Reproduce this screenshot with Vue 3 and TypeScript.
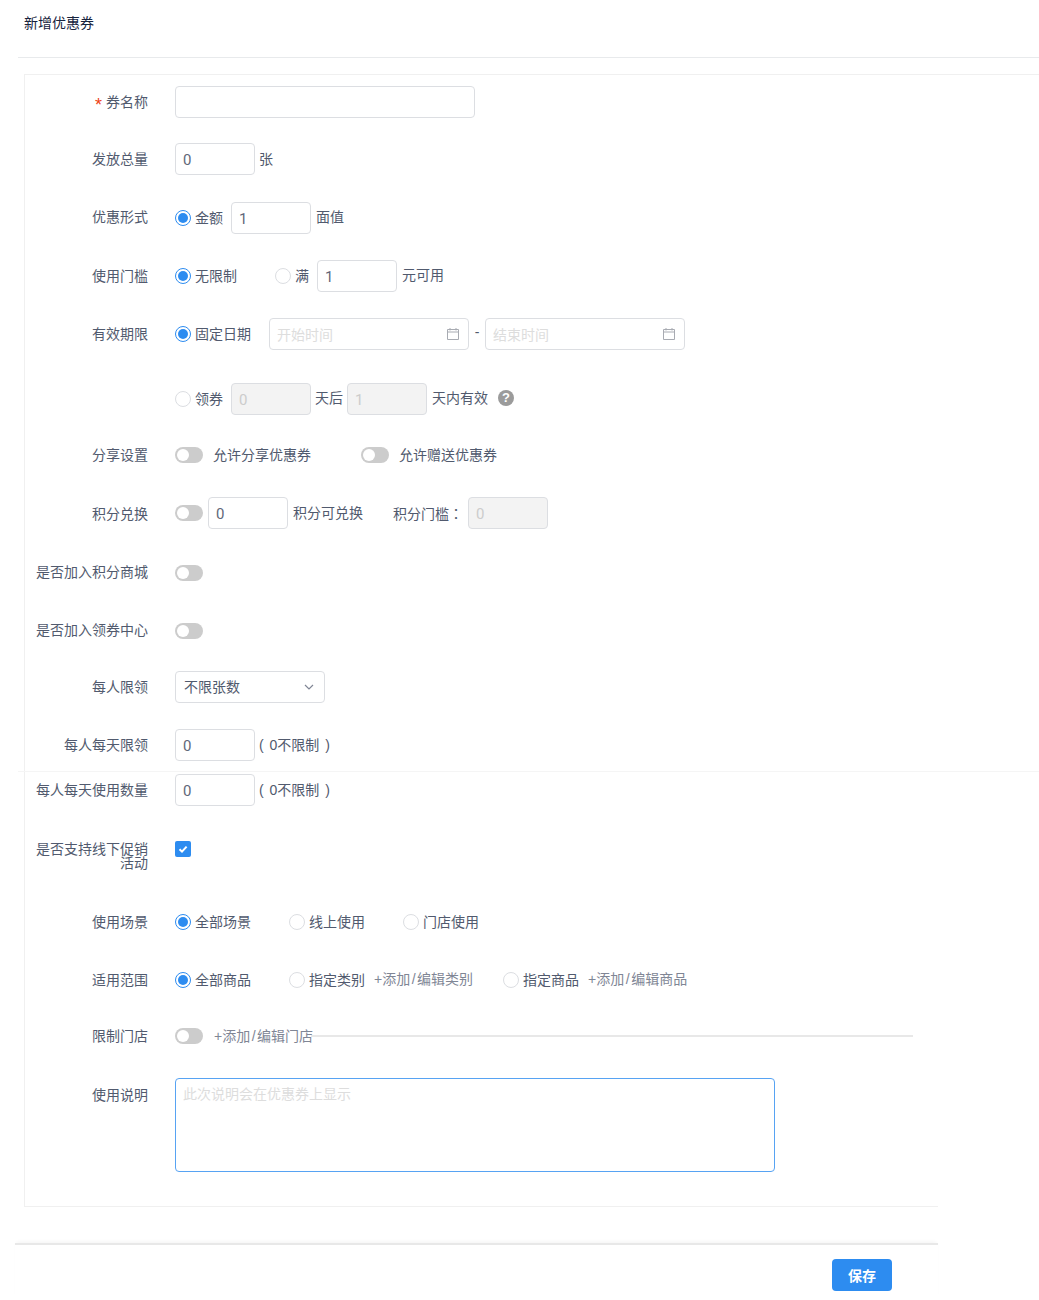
<script setup lang="ts">
import { ref } from 'vue'
const desc = ref('')
</script>

<template>
  <div class="page">
    <div class="title">新增优惠券</div>
    <div class="card">
      <div class="row">
        <label class="lbl"><span class="star">*</span> 券名称</label>
        <input class="ipt w300" />
      </div>
      <div class="row mt25">
        <label class="lbl">发放总量</label>
        <input class="ipt w80" value="0" /><span class="t ml4">张</span>
      </div>
      <div class="row mt27">
        <label class="lbl lift">优惠形式</label>
        <span class="radio on"></span><span class="t ml4">金额</span>
        <input class="ipt w80 ml8" value="1" /><span class="t ml5 up">面值</span>
      </div>
      <div class="row mt26">
        <label class="lbl">使用门槛</label>
        <span class="radio on"></span><span class="t ml4">无限制</span>
        <span class="radio ml38"></span><span class="t ml4">满</span>
        <input class="ipt w80 ml8" value="1" /><span class="t ml5 up">元可用</span>
      </div>
      <div class="row mt26">
        <label class="lbl">有效期限</label>
        <span class="radio on"></span><span class="t ml4">固定日期</span>
        <span class="date ml18">
          <input class="ipt w200" placeholder="开始时间" />
          <svg class="cal" width="14" height="14" viewBox="0 0 14 14" fill="none" stroke="#a8abb2" stroke-width="1"><path d="M1.5 2.5h11v10h-11zM1.5 5h11M4 1v2.5M10 1v2.5" /></svg>
        </span>
        <span class="t dash">-</span>
        <span class="date">
          <input class="ipt w200" placeholder="结束时间" />
          <svg class="cal" width="14" height="14" viewBox="0 0 14 14" fill="none" stroke="#a8abb2" stroke-width="1"><path d="M1.5 2.5h11v10h-11zM1.5 5h11M4 1v2.5M10 1v2.5" /></svg>
        </span>
      </div>
      <div class="row mt33">
        <label class="lbl"></label>
        <span class="radio"></span><span class="t ml4">领券</span>
        <input class="ipt w80 ml8" disabled value="0" /><span class="t ml4 up">天后</span>
        <input class="ipt w80 ml4" disabled value="1" /><span class="t ml5 up">天内有效</span>
        <span class="help">?</span>
      </div>
      <div class="row mt24">
        <label class="lbl">分享设置</label>
        <span class="sw"></span><span class="t ml10">允许分享优惠券</span>
        <span class="sw ml50"></span><span class="t ml10">允许赠送优惠券</span>
      </div>
      <div class="row mt26">
        <label class="lbl drop">积分兑换</label>
        <span class="sw"></span>
        <input class="ipt w80 ml5" value="0" /><span class="t ml5">积分可兑换</span>
        <span class="t ml30">积分门槛<span class="tc">：</span></span>
        <input class="ipt w80 ml5" disabled value="0" />
      </div>
      <div class="row mt28">
        <label class="lbl lift">是否加入积分商城</label>
        <span class="sw"></span>
      </div>
      <div class="row mt26">
        <label class="lbl lift">是否加入领券中心</label>
        <span class="sw"></span>
      </div>
      <div class="row mt24">
        <label class="lbl">每人限领</label>
        <div class="select">
          <span class="up">不限张数</span>
          <svg width="14" height="14" viewBox="0 0 14 14" fill="none" stroke="#808695" stroke-width="1.2"><path d="M3 5l4 4 4-4" /></svg>
        </div>
      </div>
      <div class="row mt26">
        <label class="lbl">每人每天限领</label>
        <input class="ipt w80" value="0" /><span class="t ml4 wide">( 0不限制 )</span>
      </div>
      <div class="row mt13">
        <label class="lbl">每人每天使用数量</label>
        <input class="ipt w80" value="0" /><span class="t ml4 wide">( 0不限制 )</span>
      </div>
      <div class="row mt27">
        <label class="lbl">是否支持线下促销活动</label>
        <span class="check">
          <svg width="10" height="10" viewBox="0 0 10 10" fill="none" stroke="#fff" stroke-width="2"><path d="M1.5 5.2 4 7.6l4.6-5" /></svg>
        </span>
      </div>
      <div class="row mt41">
        <label class="lbl">使用场景</label>
        <span class="radio on"></span><span class="t ml4">全部场景</span>
        <span class="radio ml38"></span><span class="t ml4">线上使用</span>
        <span class="radio ml38"></span><span class="t ml4">门店使用</span>
      </div>
      <div class="row mt26">
        <label class="lbl">适用范围</label>
        <span class="radio on"></span><span class="t ml4">全部商品</span>
        <span class="radio ml38"></span><span class="t ml4">指定类别</span>
        <span class="t link ml9 up">+添加<span class="slash">/</span>编辑类别</span>
        <span class="radio ml30"></span><span class="t ml4">指定商品</span>
        <span class="t link ml9 up">+添加<span class="slash">/</span>编辑商品</span>
      </div>
      <div class="row mt24 store">
        <label class="lbl">限制门店</label>
        <span class="sw"></span>
        <span class="t link ml11">+添加<span class="slash">/</span>编辑门店</span>
        <span class="rule"></span>
      </div>
      <div class="row mt26 tall">
        <label class="lbl drop">使用说明</label>
        <textarea v-model="desc" class="area" placeholder="此次说明会在优惠券上显示"></textarea>
      </div>
    </div>
    <div class="foot">
      <button class="save" type="button">保存</button>
    </div>
    <div class="overlay-line"></div>
  </div>
</template>

<style>
html, body { margin: 0; background: #fff; overflow-x: hidden; }
</style>

<style scoped>
.page {
  position: relative;
  width: 1039px;
  overflow: hidden;
  font-family: "Liberation Sans", "Noto Sans CJK SC", sans-serif;
  font-size: 14px;
  color: #515a6e;
}
.title {
  height: 41px;
  margin-left: 18px;
  padding: 16px 0 0 6px;
  border-bottom: 1px solid #e8eaec;
  line-height: 15px;
  color: #17233d;
}
.card {
  position: relative;
  box-sizing: border-box;
  width: 914px;
  height: 1133px;
  margin: 16px 0 0 24px;
  padding: 12px 25px 0 0;
  border-left: 1px solid #f0f0f0;
  border-bottom: 1px solid #f0f0f0;
}
.card::before {
  content: "";
  position: absolute;
  top: 0;
  left: 0;
  width: 1015px;
  height: 1px;
  background: #f0f0f0;
}
.row {
  display: flex;
  align-items: center;
  height: 32px;
}
.tall { height: 94px; align-items: flex-start; }
.lbl {
  align-self: flex-start;
  flex: none;
  box-sizing: border-box;
  width: 150px;
  padding: 9px 27px 0 0;
  line-height: 14px;
  text-align: right;
}
.lift { padding-top: 8px; }
.drop { padding-top: 10px; }
.star {
  position: relative;
  top: 4px;
  margin-left: -2px;
  color: #ed4014;
  font-size: 18px;
  line-height: 0;
}
.t { white-space: nowrap; line-height: 20px; position: relative; top: 0; }
.up { position: relative; top: -1px; }
.wide { word-spacing: 2px; }
.tc { font-family: "Noto Sans CJK TC", sans-serif; }
.slash { padding: 0 1.5px; }
.link { color: #808695; }
.ipt {
  box-sizing: border-box;
  height: 32px;
  padding: 5px 7px 3px;
  border: 1px solid #dcdee2;
  border-radius: 4px;
  background: #fff;
  outline: none;
  font-family: Roboto, "Noto Sans CJK SC", sans-serif;
  font-size: 15px;
  color: #5f6779;
}
.ipt::placeholder {
  color: #dddddd;
  font-family: "Liberation Sans", "Noto Sans CJK SC", sans-serif;
  font-size: 14px;
  opacity: 1;
}
.ipt:disabled { background: #f3f3f3; color: #ccc; }
.w80 { width: 80px; }
.w200 { width: 200px; }
.w300 { width: 300px; }
.ml4 { margin-left: 4px; }
.ml5 { margin-left: 5px; }
.ml8 { margin-left: 8px; }
.ml9 { margin-left: 9px; }
.ml10 { margin-left: 10px; }
.ml11 { margin-left: 11px; }
.ml18 { margin-left: 18px; }
.ml30 { margin-left: 30px; }
.ml38 { margin-left: 38px; }
.ml50 { margin-left: 50px; }
.mt13 { margin-top: 13px; }
.mt24 { margin-top: 24px; }
.mt25 { margin-top: 25px; }
.mt26 { margin-top: 26px; }
.mt27 { margin-top: 27px; }
.mt28 { margin-top: 28px; }
.mt33 { margin-top: 33px; }
.mt41 { margin-top: 41px; }
.radio {
  flex: none;
  box-sizing: border-box;
  position: relative;
  width: 16px;
  height: 16px;
  border: 1px solid #dcdee2;
  border-radius: 50%;
  background: #fff;
}
.radio.on { border-color: #2d8cf0; }
.radio.on::after {
  content: "";
  position: absolute;
  top: 2px;
  left: 2px;
  width: 10px;
  height: 10px;
  border-radius: 50%;
  background: #2d8cf0;
}
.date { position: relative; display: inline-flex; }
.cal { position: absolute; top: 9px; right: 9px; }
.dash { width: 16px; text-align: center; top: -2px; }
.help {
  flex: none;
  position: relative;
  top: -1px;
  width: 16px;
  height: 16px;
  margin-left: 10px;
  border-radius: 50%;
  background: #9b9b9b;
  color: #fff;
  font-size: 13px;
  font-weight: 700;
  line-height: 16px;
  text-align: center;
}
.sw {
  flex: none;
  position: relative;
  width: 28px;
  height: 16px;
  border-radius: 8px;
  background: #ccc;
}
.sw::after {
  content: "";
  position: absolute;
  top: 2px;
  left: 2px;
  width: 12px;
  height: 12px;
  border-radius: 50%;
  background: #fff;
}
.select {
  box-sizing: border-box;
  display: flex;
  align-items: center;
  justify-content: space-between;
  width: 150px;
  height: 32px;
  padding: 0 8px 0 8px;
  border: 1px solid #dcdee2;
  border-radius: 4px;
}
.check {
  display: flex;
  align-items: center;
  justify-content: center;
  width: 16px;
  height: 16px;
  border-radius: 2px;
  background: #2d8cf0;
}
.rule {
  flex: 1;
  height: 2px;
  margin-left: -2px;
  background: #e8e8e8;
}
.area {
  box-sizing: border-box;
  display: block;
  width: 600px;
  height: 94px;
  padding: 7px;
  border: 1px solid #57a3f3;
  border-radius: 4px;
  outline: none;
  resize: none;
  font: inherit;
  line-height: 16px;
  color: #515a6e;
}
.area::placeholder { color: #dddddd; opacity: 1; }
.foot {
  display: flex;
  justify-content: flex-end;
  box-sizing: border-box;
  width: 923px;
  margin: 36px 0 0 15px;
  padding: 14px 46px 9px 0;
  border-top: 2px solid #e8e8e8;
  box-shadow: 0 -3px 4px -2px rgba(0, 0, 0, 0.05);
}
.save {
  width: 60px;
  height: 32px;
  padding: 0;
  border: 0;
  border-radius: 4px;
  background: #2d8cf0;
  color: #fff;
  font: inherit;
  font-weight: 700;
}
.overlay-line {
  position: absolute;
  top: 771px;
  left: 18px;
  right: 0;
  height: 1px;
  background: #f5f5f5;
}
</style>
